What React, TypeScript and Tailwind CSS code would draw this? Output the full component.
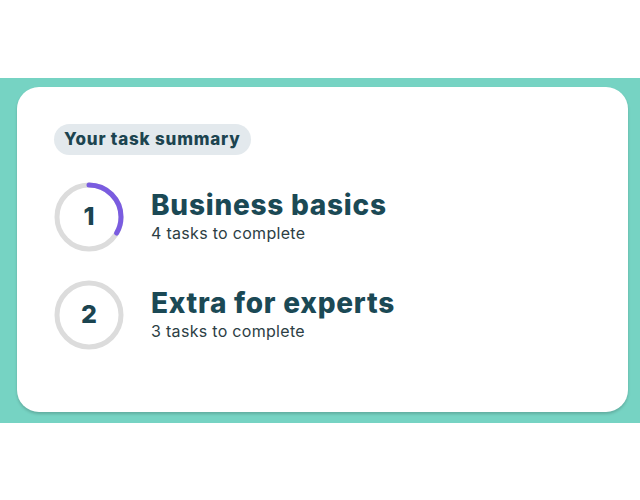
type Section = {
  num: number
  title: string
  tasks: number
  progress: number
}

const sections: Section[] = [
  { num: 1, title: 'Business basics', tasks: 4, progress: 1 / 3 },
  { num: 2, title: 'Extra for experts', tasks: 3, progress: 0 },
]

function ProgressRing({ num, progress }: { num: number; progress: number }) {
  const r = 32
  const c = 2 * Math.PI * r
  return (
    <div className="relative w-[70px] h-[70px] shrink-0">
      <svg width="70" height="70" viewBox="0 0 70 70" className="absolute inset-0">
        <circle cx="35" cy="35" r={r} fill="none" stroke="#dcdcdc" strokeWidth="5" />
        {progress > 0 && (
          <circle
            cx="35"
            cy="35"
            r={r}
            fill="none"
            stroke="#7a5ce0"
            strokeWidth="5"
            strokeLinecap="round"
            strokeDasharray={`${c * progress} ${c}`}
            transform="rotate(-90 35 35)"
          />
        )}
      </svg>
      <div className="absolute inset-0 flex items-center justify-center text-[25px] font-extrabold text-[#1b4450]">
        {num}
      </div>
    </div>
  )
}

export default function App() {
  return (
    <div className="w-[640px] h-[500px] bg-white pt-[78px] font-['Inter',sans-serif]">
      <div className="h-[345px] bg-[#76d3c3] pl-[17px] pr-[12px] pt-[9px] pb-[11px]">
        <div className="h-full bg-white rounded-[22px] shadow-[0_2px_3px_rgba(0,0,0,0.18)] pl-[37px] pt-[37px]">
          <span className="inline-flex items-center h-[31px] px-[10px] rounded-full bg-[#e3e9ed] text-[17px] font-extrabold text-[#1c4450] tracking-[0.8px]">
            Your task summary
          </span>
          <div className="mt-[27px] flex flex-col gap-[28px]">
            {sections.map(s => (
              <div key={s.num} className="flex items-center gap-[27px]">
                <ProgressRing num={s.num} progress={s.progress} />
                <div className="flex flex-col">
                  <div className="text-[28px] leading-[32px] font-extrabold text-[#1b4955] tracking-[0.75px] -mt-[2px] mb-[2px]">{s.title}</div>
                  <div className="text-[16px] leading-[20px] text-[#2c3e44] tracking-[0.3px]">{s.tasks} tasks to complete</div>
                </div>
              </div>
            ))}
          </div>
        </div>
      </div>
    </div>
  )
}
